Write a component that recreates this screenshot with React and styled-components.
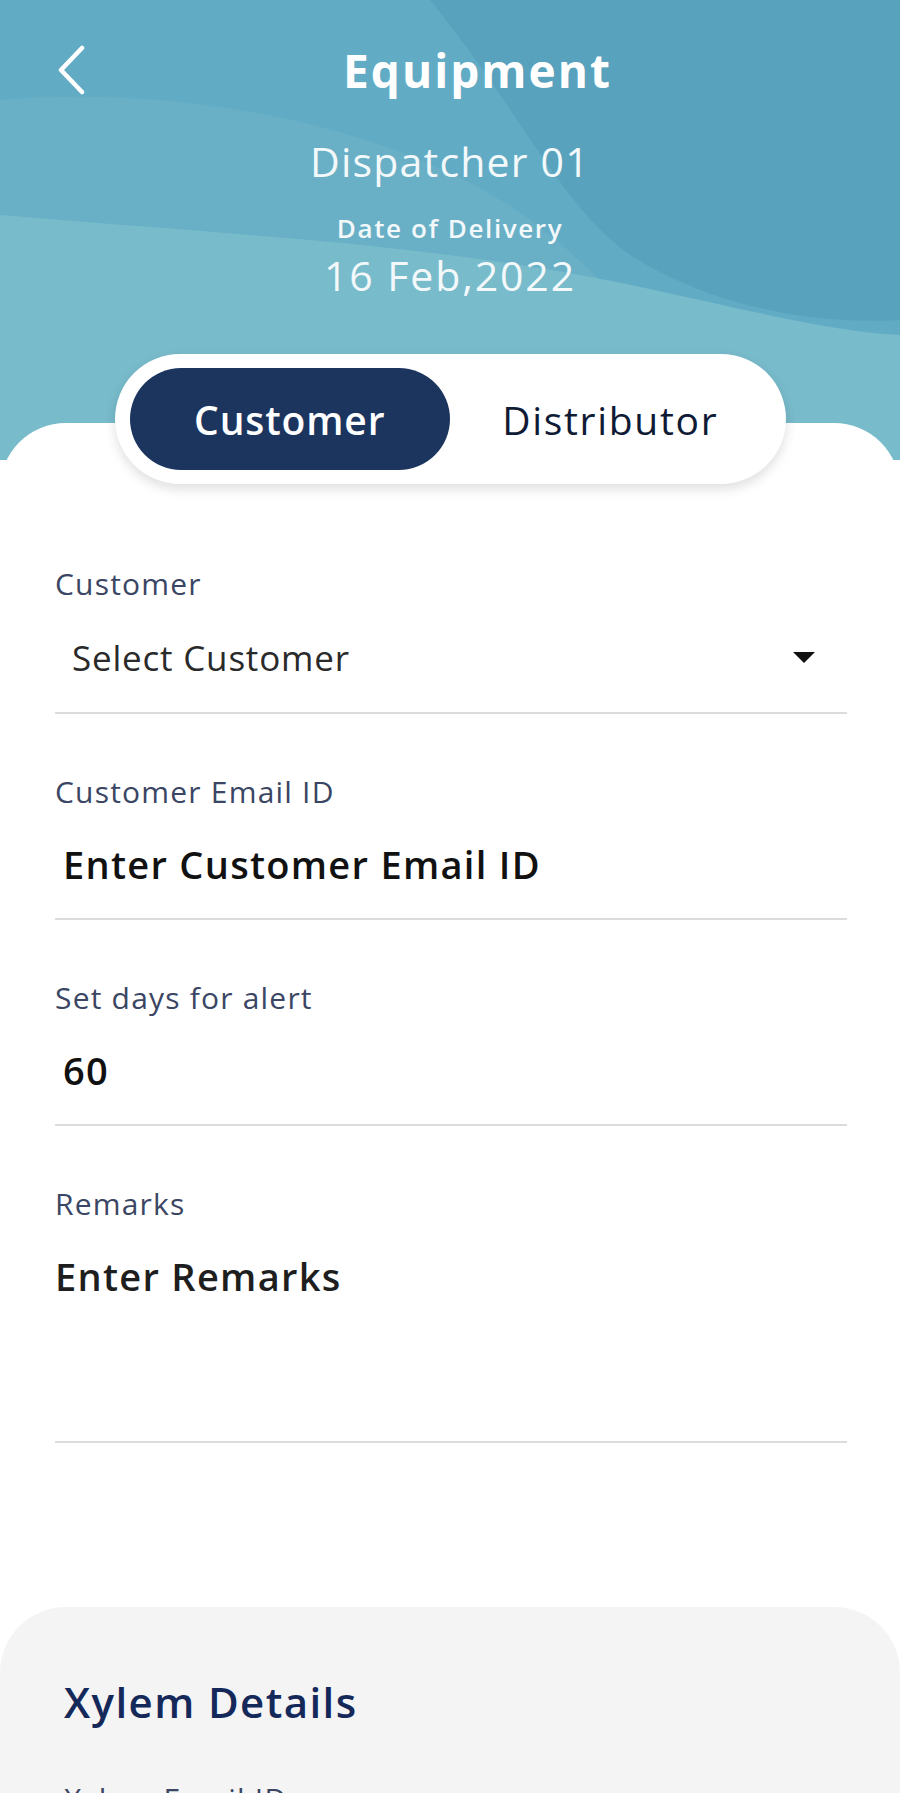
import React from "react";
import styled, { createGlobalStyle } from "styled-components";

const GlobalStyle = createGlobalStyle`
  html, body { margin: 0; padding: 0; background: #ffffff; }
  body { font-family: "Open Sans", "Liberation Sans", sans-serif; }
  * { box-sizing: border-box; }
`;

const Page = styled.div`
  width: 900px;
  min-height: 1793px;
  overflow: hidden;
  background: #ffffff;
  display: flex;
  flex-direction: column;
`;

const Header = styled.header`
  position: relative;
  height: 460px;
  padding-top: 40px;
  background: #62abc4;
  color: #ffffff;
  display: flex;
  flex-direction: column;
  align-items: center;
`;

const Waves = styled.svg`
  position: absolute;
  inset: 0;
  width: 100%;
  height: 100%;
  z-index: 0;
`;

const HeaderContent = styled.div`
  position: relative;
  z-index: 1;
  width: 100%;
  display: flex;
  flex-direction: column;
  align-items: center;
`;

const TopBar = styled.div`
  width: 100%;
  padding: 0 55px;
  display: flex;
  align-items: center;
`;

const BackButton = styled.button`
  width: 55px;
  height: 60px;
  padding: 0;
  border: none;
  background: transparent;
  display: flex;
  align-items: center;
  justify-content: flex-start;
  cursor: pointer;
`;

const Title = styled.h1`
  flex: 1;
  margin: 0;
  text-align: center;
  font-size: 46px;
  line-height: 60px;
  font-weight: 700;
  letter-spacing: 2px;
`;

const SubTitle = styled.div`
  margin-top: 36px;
  font-size: 41px;
  line-height: 50px;
  font-weight: 400;
  letter-spacing: 1.2px;
  color: #f3f8fa;
`;

const DateLabel = styled.div`
  margin-top: 25px;
  font-size: 26px;
  line-height: 34px;
  font-weight: 600;
  letter-spacing: 1.6px;
  color: #f3f8fa;
`;

const DateValue = styled.div`
  margin-top: 5px;
  font-size: 41px;
  line-height: 50px;
  font-weight: 400;
  letter-spacing: 1.9px;
  color: #f3f8fa;
`;

const Sheet = styled.main`
  position: relative;
  z-index: 1;
  margin-top: -37px;
  background: #ffffff;
  border-radius: 66px 66px 0 0;
  display: flex;
  flex-direction: column;
`;

const Switch = styled.div`
  margin: -69px auto 0;
  width: 671px;
  height: 130px;
  padding: 14px 15px;
  border-radius: 65px;
  background: #ffffff;
  box-shadow: 0 5px 12px rgba(0, 0, 0, 0.13);
  display: flex;
`;

const Tab = styled.div`
  flex: 1;
  border-radius: 51px;
  display: flex;
  align-items: center;
  justify-content: center;
  font-size: 39px;
  letter-spacing: ${(p) => (p.$active ? "0.9px" : "1.7px")};
  font-weight: ${(p) => (p.$active ? 600 : 500)};
  color: ${(p) => (p.$active ? "#ffffff" : "#0f1b35")};
  background: ${(p) => (p.$active ? "#1b355f" : "transparent")};
`;

const Form = styled.form`
  margin-top: 80px;
  padding: 0 53px 0 55px;
  display: flex;
  flex-direction: column;
  gap: 58px;
`;

const Field = styled.div`
  display: flex;
  flex-direction: column;
  border-bottom: 2px solid #dcdcdc;
  padding-bottom: 29px;
`;

const Label = styled.label`
  font-size: 30px;
  line-height: 40px;
  letter-spacing: 1.2px;
  color: #3a4663;
  font-weight: 400;
`;

const InputRow = styled.div`
  margin-top: ${(p) => (p.$strong ? 27 : 29)}px;
  min-height: ${(p) => p.$minHeight || 50}px;
  padding-left: ${(p) => p.$indent || 0}px;
  padding-right: 32px;
  display: flex;
  align-items: flex-start;
  justify-content: space-between;
  font-size: ${(p) => (p.$strong ? 38 : 35)}px;
  line-height: 50px;
  letter-spacing: ${(p) => (p.$strong ? 1.3 : 0.8)}px;
  font-weight: ${(p) => p.$weight || 400};
  color: ${(p) => p.$color || "#161616"};
`;

const Caret = styled.svg`
  margin-top: 19px;
  flex: none;
`;

const Details = styled.section`
  margin-top: 164px;
  background: #f4f4f4;
  border-radius: 66px 66px 0 0;
  padding: 70px 64px 0;
  flex: 1;
  display: flex;
  flex-direction: column;
`;

const DetailsTitle = styled.h2`
  margin: 0;
  font-size: 42px;
  line-height: 50px;
  font-weight: 600;
  letter-spacing: 1.4px;
  color: #14295a;
`;

const DetailsLabel = styled.div`
  margin-top: 52px;
  font-size: 30px;
  line-height: 40px;
  letter-spacing: 1.2px;
  color: #3a4663;
`;

export default function App() {
  return (
    <Page>
      <GlobalStyle />
      <Header>
        <Waves viewBox="0 0 900 460" preserveAspectRatio="none" aria-hidden="true">
          <rect x="0" y="0" width="900" height="460" fill="#62abc4" />
          <path d="M0,100 C140,88 300,110 420,160 C520,200 570,250 620,300 L0,300 Z" fill="#69b0c6" />
          <path d="M430,0 L900,0 L900,320 C800,326 700,300 630,255 C560,205 520,110 430,0 Z" fill="#58a2bd" />
          <path d="M0,215 C200,232 360,240 520,265 C660,285 800,330 900,335 L900,460 L0,460 Z" fill="#78bbcb" />
        </Waves>
        <HeaderContent>
          <TopBar>
            <BackButton aria-label="Back">
              <svg width="30" height="50" viewBox="0 0 30 50">
                <path d="M27 3 L6 25 L27 47" fill="none" stroke="#ffffff" strokeWidth="4.5" strokeLinecap="round" strokeLinejoin="round" />
              </svg>
            </BackButton>
            <Title>Equipment</Title>
          </TopBar>
          <SubTitle>Dispatcher 01</SubTitle>
          <DateLabel>Date of Delivery</DateLabel>
          <DateValue>16 Feb,2022</DateValue>
        </HeaderContent>
      </Header>
      <Sheet>
        <Switch>
          <Tab $active>Customer</Tab>
          <Tab>Distributor</Tab>
        </Switch>
        <Form>
          <Field>
            <Label>Customer</Label>
            <InputRow $indent={17} $color="#2a2a2a">
              <span>Select Customer</span>
              <Caret width="22" height="11" viewBox="0 0 22 11">
                <path d="M0 0 L22 0 L11 11 Z" fill="#111111" />
              </Caret>
            </InputRow>
          </Field>
          <Field>
            <Label>Customer Email ID</Label>
            <InputRow $strong $indent={8} $weight={600} $color="#111111">
              <span>Enter Customer Email ID</span>
            </InputRow>
          </Field>
          <Field>
            <Label>Set days for alert</Label>
            <InputRow $strong $indent={8} $weight={600} $color="#111111">
              <span>60</span>
            </InputRow>
          </Field>
          <Field>
            <Label>Remarks</Label>
            <InputRow $strong $minHeight={161} $weight={600} $color="#1e1e1e">
              <span>Enter Remarks</span>
            </InputRow>
          </Field>
        </Form>
        <Details>
          <DetailsTitle>Xylem Details</DetailsTitle>
          <DetailsLabel>Xylem Email ID</DetailsLabel>
        </Details>
      </Sheet>
    </Page>
  );
}
